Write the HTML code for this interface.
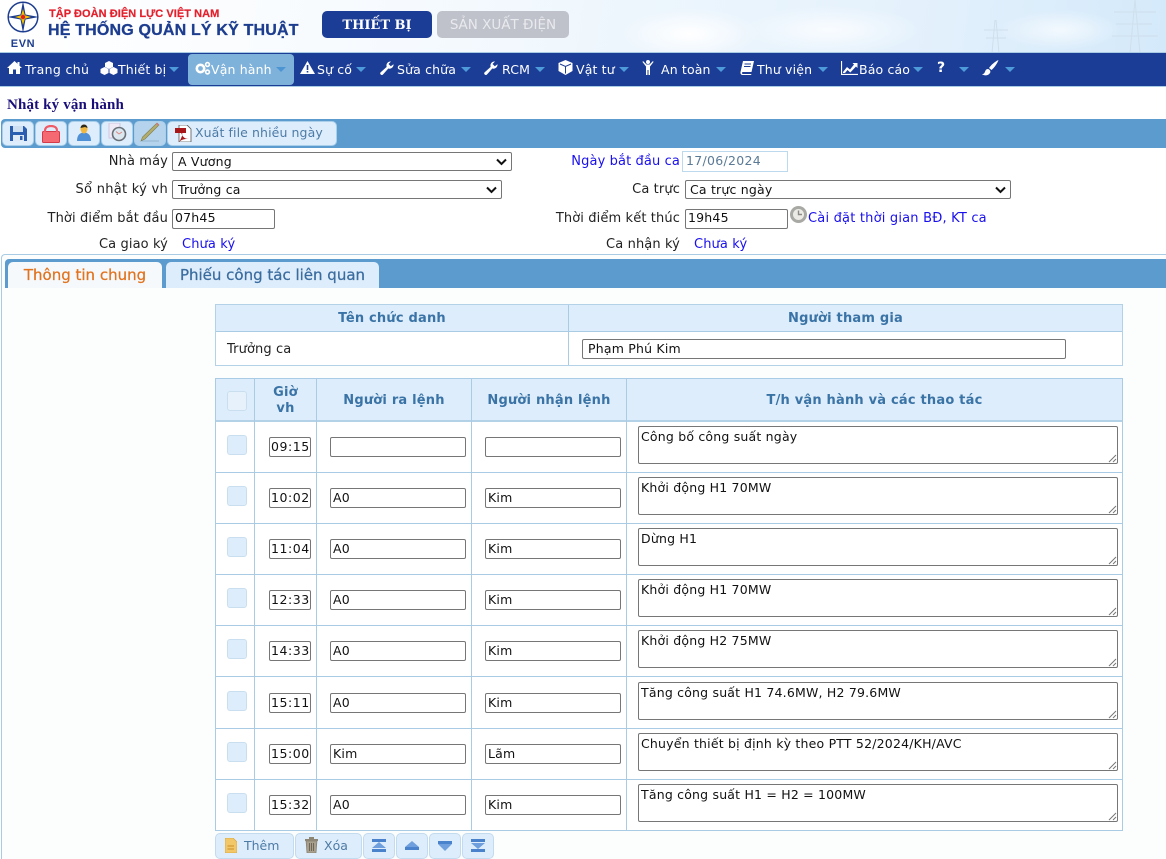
<!DOCTYPE html>
<html><head><meta charset="utf-8">
<style>
*{box-sizing:border-box}
html,body{margin:0;padding:0;width:1166px;height:859px;overflow:hidden;background:#fff}
body{font-family:"DejaVu Sans","Liberation Sans",sans-serif;font-size:12.5px;color:#222;position:relative}
.a{position:absolute;white-space:nowrap}
.r{position:absolute;white-space:nowrap;text-align:right}
.l{line-height:16px;font-size:13px;letter-spacing:.12px}
.box{position:absolute;background:#fff;border:1px solid #767676;border-radius:2px;color:#111;white-space:nowrap;padding-left:2px;font-size:12.5px;line-height:18px;letter-spacing:.2px}
.t{padding-left:1px;letter-spacing:.55px}
.ta{line-height:19px}
.sel{padding-left:4px}
.sel svg{position:absolute;right:4px;top:5px}
.b{color:#1a10ee}
.line{position:absolute;background:#a9cbe4}
.cb{position:absolute;width:20px;height:20px;background:#deedfb;border:1px solid #c9dfef;border-radius:3px}
.th{position:absolute;text-align:center;font-weight:bold;color:#3a73a6;font-size:13px;letter-spacing:.2px}
.nav{position:absolute;top:62px;color:#fff;font-size:12.5px;white-space:nowrap;line-height:16px;letter-spacing:.15px}
.car{position:absolute;top:67px;width:0;height:0;border-left:5px solid transparent;border-right:5px solid transparent;border-top:5px solid #4d9bd8}
.tb{position:absolute;top:121px;height:25px;background:#deedfb;border:1px solid #a9cfea;border-radius:5px}
.bb{position:absolute;top:833px;height:26px;background:#deedfb;border:1px solid #c3dbee;border-radius:5px;color:#4d7ba6;font-size:12.5px;line-height:24px}
svg{position:absolute;display:block}
</style></head><body>

<!-- header bg -->
<div class="a" style="left:0;top:0;width:1166px;height:53px;background:radial-gradient(ellipse 70px 26px at 690px 34px,#ffffff 0%,rgba(255,255,255,0) 100%),radial-gradient(ellipse 90px 24px at 830px 30px,#f9fcff 0%,rgba(255,255,255,0) 100%),radial-gradient(ellipse 60px 20px at 1060px 30px,#f3f9fe 0%,rgba(255,255,255,0) 100%),linear-gradient(100deg,#ffffff 0%,#f6fafe 35%,#edf6fd 55%,#e4f1fc 78%,#d4e9fa 100%)"></div>
<svg style="left:980px;top:0" width="186" height="53"><g stroke="#cfdfeb" stroke-width="1" fill="none"><path d="M150 53L155 0M160 53L155 0M134 12H176M136 24H172M132 36H178"/><path d="M12 53L15 20M19 53L16 20M4 30H28M6 38H26"/></g></svg>
<svg style="left:5px;top:1px" width="36" height="48" viewBox="0 0 36 48">
<circle cx="18" cy="16" r="14.800" fill="none" stroke="#1d3d8f" stroke-width="1.500"/>
<path d="M18 0L20.500 13.500L34 16L20.500 18.500L18 32L15.500 18.500L2 16L15.500 13.500Z" fill="#1d3d8f"/>
<path d="M18 8L19.800 14.200L26 16L19.800 17.800L18 24L16.200 17.800L10 16L16.200 14.200Z" fill="#f2c200"/>
<circle cx="18" cy="16" r="2.200" fill="#e02020"/>
<text x="18" y="46" text-anchor="middle" font-family="Liberation Sans" font-weight="bold" font-size="11" fill="#1d3d8f" letter-spacing=".6">EVN</text>
</svg>
<div class="a" style="left:49px;top:7px;font:bold 11px/15px 'Liberation Sans',sans-serif;color:#e3202c;letter-spacing:.05px;-webkit-text-stroke:.2px #e3202c">TẬP ĐOÀN ĐIỆN LỰC VIỆT NAM</div>
<div class="a" style="left:48px;top:21px;font:bold 16px/20px 'Liberation Sans',sans-serif;color:#1d3d8f;letter-spacing:.18px;-webkit-text-stroke:.3px #1d3d8f">HỆ THỐNG QUẢN LÝ KỸ THUẬT</div>
<div class="a" style="left:322px;top:11px;width:110px;height:27px;border-radius:5px;background:#1c3d96;color:#fff;text-align:center;font:bold 13px/29px 'DejaVu Serif','Liberation Serif',serif">THIẾT BỊ</div>
<div class="a" style="left:437px;top:11px;width:132px;height:27px;border-radius:5px;background:#bfc1cb;color:#e9eaee;text-align:center;font:13.500px/29px 'DejaVu Sans',sans-serif">SẢN XUẤT ĐIỆN</div>

<!-- nav -->
<div class="a" style="left:0;top:52px;width:1166px;height:35px;background:#1c3d96;border-top:1px solid #a9cbe4;border-bottom:1px solid #a9cbe4"></div>
<div class="a" style="left:188px;top:54px;width:106px;height:31px;background:#7fb2da;border-radius:4px"></div>

<svg style="left:7px;top:61px" width="15" height="13" viewBox="0 0 15 13"><path d="M7.500 0L10.500 2.800V1H12.500V4.700L15 7H13V13H9V8.500H6V13H2V7H0Z" fill="#fff"/></svg>
<div class="nav" style="left:25px;letter-spacing:.35px">Trang chủ</div>
<svg style="left:100px;top:61px" width="18" height="14" viewBox="0 0 18 14"><g fill="#fff"><path d="M9 0l4 2v4l-4 2-4-2V2z"/><path d="M4.500 6l4 2v4l-4 2-4-2V8z"/><path d="M13.500 6l4 2v4l-4 2-4-2V8z"/></g></svg>
<div class="nav" style="left:118px">Thiết bị</div><div class="car" style="left:169px"></div>
<svg style="left:195px;top:61px" width="16" height="14" viewBox="0 0 16 14"><circle cx="5.500" cy="7.500" r="3.700" fill="none" stroke="#fff" stroke-width="2.600"/><circle cx="12.500" cy="3.500" r="1.900" fill="none" stroke="#fff" stroke-width="1.600"/><circle cx="12.500" cy="11" r="1.900" fill="none" stroke="#fff" stroke-width="1.600"/></svg>
<div class="nav" style="left:211px">Vận hành</div><div class="car" style="left:276px;border-top-color:#4d94d2"></div>
<svg style="left:300px;top:61px" width="15" height="13" viewBox="0 0 15 13"><path d="M7.500 0L15 13H0Z" fill="#fff"/><path d="M6.700 4h1.600v5H6.700zM6.700 10h1.600v1.500H6.700z" fill="#1c3d96"/></svg>
<div class="nav" style="left:317px">Sự cố</div><div class="car" style="left:356px"></div>
<svg style="left:380px;top:61px" width="14" height="14" viewBox="0 0 14 14"><path d="M13.500 3.200a4 4 0 0 1-5.200 4.300L3 13.500a1.500 1.500 0 0 1-2.300-2.200l6-5.400A4 4 0 0 1 11 .5L8.500 3l2.300 2.300z" fill="#fff"/></svg>
<div class="nav" style="left:397px">Sửa chữa</div><div class="car" style="left:461px"></div>
<svg style="left:484px;top:61px" width="14" height="14" viewBox="0 0 14 14"><path d="M13.500 3.200a4 4 0 0 1-5.200 4.300L3 13.500a1.500 1.500 0 0 1-2.300-2.200l6-5.400A4 4 0 0 1 11 .5L8.500 3l2.300 2.300z" fill="#fff"/></svg>
<div class="nav" style="left:502px">RCM</div><div class="car" style="left:535px"></div>
<svg style="left:558px;top:60px" width="15" height="15" viewBox="0 0 15 15"><path d="M7.500 0L14.500 3V11L7.500 15L.5 11V3Z" fill="#fff"/><path d="M2 4L7.500 6.500L13 4M7.500 6.500V13.500" stroke="#1c3d96" stroke-width="1" fill="none"/></svg>
<div class="nav" style="left:576px">Vật tư</div><div class="car" style="left:619px"></div>
<svg style="left:642px;top:60px" width="12" height="15" viewBox="0 0 12 15"><circle cx="6" cy="2" r="2" fill="#fff"/><path d="M1 1L4.500 4.500H7.500L11 1L11.500 2L8 6.500V15H6.500V10H5.500V15H4V6.500L.5 2Z" fill="#fff"/></svg>
<div class="nav" style="left:661px">An toàn</div><div class="car" style="left:716px"></div>
<svg style="left:740px;top:61px" width="14" height="14" viewBox="0 0 14 14"><path d="M3 0H14L11.500 11H2.500Q1.500 12 2.500 13H11.500L11 14H2Q0 13 .5 11Z" fill="#fff"/><path d="M4.500 3H11M4 5.500H10.500" stroke="#1c3d96" stroke-width=".9"/></svg>
<div class="nav" style="left:757px">Thư viện</div><div class="car" style="left:818px"></div>
<svg style="left:841px;top:61px" width="17" height="14" viewBox="0 0 17 14"><path d="M.5 0V13.500H17" stroke="#fff" stroke-width="1.200" fill="none"/><path d="M2 11L6 6L9 8.500L13 3.500L11.500 2H16.500V7L15 5.500L9.300 11.500L6.500 9L4 12H2Z" fill="#fff"/></svg>
<div class="nav" style="left:859px">Báo cáo</div><div class="car" style="left:913px"></div>
<div class="nav" style="left:937px;top:60px;font-weight:bold;font-size:14px">?</div><div class="car" style="left:959px"></div>
<svg style="left:981px;top:60px" width="18" height="16" viewBox="0 0 18 16"><path d="M17.500 0C14 1.500 10 5 8 8L10.500 10C13 8 16 4 17.500 0Z" fill="#fff"/><path d="M7 9C4 9 4.500 12 3 13.500C2.500 14 1.500 14 1 14C3 16 7 16 9 13C10 11.500 9 9.500 7 9Z" fill="#fff"/></svg>
<div class="car" style="left:1005px"></div>

<!-- title -->
<div class="a" style="left:7px;top:97px;font:bold 15px/17px 'Liberation Serif','DejaVu Serif',serif;color:#1a0f7a;letter-spacing:.15px">Nhật ký vận hành</div>

<!-- toolbar -->
<div class="a" style="left:1px;top:119px;width:1165px;height:29px;background:#5b9bce;border-radius:4px 0 0 4px"></div>
<div class="tb" style="left:2px;width:32px"></div>
<div class="tb" style="left:35px;width:32px"></div>
<div class="tb" style="left:68px;width:32px"></div>
<div class="tb" style="left:101px;width:32px"></div>
<div class="tb" style="left:134px;width:32px;background:#b5d3ec"></div>
<div class="tb" style="left:167px;width:170px"></div>
<svg style="left:10px;top:125px" width="17" height="17" viewBox="0 0 17 17"><path d="M0 1H14L17 4V16H0Z" fill="#2a5db0"/><rect x="3" y="1" width="10" height="6" fill="#cfdff2"/><rect x="3" y="10" width="11" height="6" fill="#dfe9f5"/><rect x="10" y="11" width="2.500" height="4" fill="#2a5db0"/></svg>
<svg style="left:42px;top:125px" width="18" height="18" viewBox="0 0 18 18"><rect x=".5" y="6.500" width="17" height="11" rx="1" fill="#f56a72" stroke="#d43a48"/><path d="M3 7V5.500C3 2.500 5.500 1 9 1S15 2.500 15 5.500V7" fill="none" stroke="#ef5a66" stroke-width="2.200"/></svg>
<svg style="left:77px;top:124px" width="14" height="17" viewBox="0 0 14 17"><path d="M0 17C0 11 3 8.500 7 8.500S14 11 14 17Z" fill="#4f8fd6"/><ellipse cx="7" cy="5" rx="3.500" ry="4.500" fill="#f1b840"/><path d="M3.500 4a3.500 3.500 0 0 1 7 0L8 3Z" fill="#2e2a18"/></svg>
<svg style="left:108px;top:123px" width="19" height="19" viewBox="0 0 19 19"><rect x="1" y="0" width="11" height="15" fill="#efeaf6" stroke="#cfc7e0"/><circle cx="11" cy="11" r="6.500" fill="#dbe8ef" stroke="#6a7078" stroke-width="1.600"/><path d="M11 11L8 8.500M11 11L14 9" stroke="#d88" stroke-width="1"/></svg>
<svg style="left:140px;top:122px" width="20" height="20" viewBox="0 0 20 20"><path d="M17 1L19 3L5 17L1 19L2.500 15Z" fill="#b3ad6a" stroke="#7e7a55" stroke-width=".6"/><path d="M16 2L18 4L19 3L17 1Z" fill="#d9787c"/><path d="M2 19L19 19" stroke="#8aa9c4" stroke-width=".8"/></svg>
<svg style="left:175px;top:125px" width="17" height="17" viewBox="0 0 17 17"><path d="M4 0H12L16 4V17H4Z" fill="#fff" stroke="#555" stroke-width=".8"/><path d="M0 3H11V8H0Z" fill="#a81818"/><path d="M6 7C7 11 9 14 14 14C10 14 7 14 4 17C6 14 8 10 7 7Z" fill="#a81818"/></svg>
<div class="a" style="left:195px;top:125px;font-size:12.5px;line-height:16px;color:#4d7ba6;letter-spacing:.1px">Xuất file nhiều ngày</div>

<!-- form -->
<div class="r l" style="right:998px;top:154px">Nhà máy</div>
<div class="box sel" style="left:172px;top:152px;width:340px;height:19px;line-height:17px;padding-left:5px">A Vương<svg width="11" height="8" viewBox="0 0 11 8" style="right:4px;top:5px"><path d="M1 1.500L5.500 6L10 1.500" fill="none" stroke="#111" stroke-width="2"/></svg></div>
<div class="r l" style="right:998px;top:182px;letter-spacing:.28px">Sổ nhật ký vh</div>
<div class="box sel" style="left:172px;top:180px;width:330px;height:19px;line-height:17px;padding-left:5px">Trưởng ca<svg width="11" height="8" viewBox="0 0 11 8" style="right:4px;top:5px"><path d="M1 1.500L5.500 6L10 1.500" fill="none" stroke="#111" stroke-width="2"/></svg></div>
<div class="r l" style="right:998px;top:211px">Thời điểm bắt đầu</div>
<div class="box" style="left:172px;top:209px;width:103px;height:20px;line-height:16px">07h45</div>
<div class="r l" style="right:998px;top:237px">Ca giao ký</div>
<div class="a b l" style="left:182px;top:237px">Chưa ký</div>

<div class="r b l" style="right:486px;top:154px">Ngày bắt đầu ca</div>
<div class="a" style="left:682px;top:151px;width:106px;height:21px;border:1px solid #bcd9ee;color:#5b7a96;padding-left:3px;line-height:18px;font-size:12.500px;letter-spacing:.3px">17/06/2024</div>
<div class="r l" style="right:486px;top:182px">Ca trực</div>
<div class="box sel" style="left:685px;top:180px;width:326px;height:19px;line-height:17px">Ca trực ngày<svg width="11" height="8" viewBox="0 0 11 8" style="right:4px;top:5px"><path d="M1 1.500L5.500 6L10 1.500" fill="none" stroke="#111" stroke-width="2"/></svg></div>
<div class="r l" style="right:486px;top:211px">Thời điểm kết thúc</div>
<div class="box" style="left:685px;top:209px;width:103px;height:20px;line-height:16px">19h45</div>
<svg style="left:790px;top:206px" width="17" height="17" viewBox="0 0 17 17"><circle cx="8.500" cy="8.500" r="8.500" fill="#a8a8a4"/><circle cx="8.500" cy="8.500" r="5.500" fill="#eceae4"/><path d="M8.500 4.500V8.500H12" stroke="#8a8a86" stroke-width="1.400" fill="none"/></svg>
<div class="a b l" style="left:808px;top:211px;letter-spacing:.2px">Cài đặt thời gian BĐ, KT ca</div>
<div class="r l" style="right:486px;top:237px">Ca nhận ký</div>
<div class="a b l" style="left:694px;top:237px">Chưa ký</div>

<!-- tab panel -->
<div class="a" style="left:1px;top:254px;width:1165px;height:605px;border-top:1px solid #a9cbe4;border-left:1px solid #a9cbe4;border-radius:4px 0 0 0;background:#fcfefe"></div>
<div class="a" style="left:5px;top:259px;width:1161px;height:29px;background:#5b9bce;border-radius:4px 0 0 0"></div>
<div class="a" style="left:8px;top:262px;width:154px;height:26px;background:#f6f9fb;border-radius:5px 5px 0 0;color:#e1731f;font-size:15px;line-height:27px;text-align:center;-webkit-text-stroke:.25px #e1731f">Thông tin chung</div>
<div class="a" style="left:166px;top:262px;width:213px;height:26px;background:#deedfb;border-radius:5px 5px 0 0;color:#3a6c9f;font-size:15px;line-height:27px;text-align:center;-webkit-text-stroke:.25px #3a6c9f">Phiếu công tác liên quan</div>

<!-- table 1 -->
<div class="a" style="left:215px;top:304px;width:908px;height:62px;background:#fff;border:1px solid #b3d2e8"></div>
<div class="a" style="left:216px;top:305px;width:906px;height:27px;background:#deedfb;border-bottom:1px solid #a9cbe4"></div>
<div class="line" style="left:568px;top:305px;width:1px;height:60px"></div>
<div class="th" style="left:216px;width:352px;top:310px;line-height:18px">Tên chức danh</div>
<div class="th" style="left:569px;width:553px;top:310px;line-height:18px">Người tham gia</div>
<div class="a l" style="left:227px;top:341px;line-height:18px">Trưởng ca</div>
<div class="box" style="left:582px;top:339px;width:484px;height:20px;line-height:17px;padding-left:5px">Phạm Phú Kim</div>

<!-- table 2 -->
<div class="a" style="left:215px;top:378px;width:908px;height:453px;background:#fff;border:1px solid #a9cbe4"></div>
<div class="a" style="left:216px;top:379px;width:906px;height:43px;background:#deedfb;border-bottom:2px solid #b3d2e8"></div>
<div class="line" style="left:254px;top:379px;width:1px;height:452px"></div>
<div class="line" style="left:316px;top:379px;width:1px;height:452px"></div>
<div class="line" style="left:471px;top:379px;width:1px;height:452px"></div>
<div class="line" style="left:626px;top:379px;width:1px;height:452px"></div>
<div class="line" style="left:216px;top:472px;width:906px;height:1px"></div>
<div class="line" style="left:216px;top:523px;width:906px;height:1px"></div>
<div class="line" style="left:216px;top:574px;width:906px;height:1px"></div>
<div class="line" style="left:216px;top:625px;width:906px;height:1px"></div>
<div class="line" style="left:216px;top:676px;width:906px;height:1px"></div>
<div class="line" style="left:216px;top:728px;width:906px;height:1px"></div>
<div class="line" style="left:216px;top:779px;width:906px;height:1px"></div>
<div class="cb" style="left:227px;top:391px;background:#e6f1fb"></div>
<div class="th" style="left:255px;width:61px;top:385px;line-height:16px">Giờ<br>vh</div>
<div class="th" style="left:317px;width:154px;top:393px;line-height:16px">Người ra lệnh</div>
<div class="th" style="left:472px;width:154px;top:393px;line-height:16px">Người nhận lệnh</div>
<div class="th" style="left:627px;width:495px;top:393px;line-height:16px">T/h vận hành và các thao tác</div>

<div class="cb" style="left:227px;top:435px"></div>
<div class="box t" style="left:269px;top:437px;width:42px;height:20px;line-height:17px">09:15</div>
<div class="box" style="left:330px;top:437px;width:136px;height:20px;line-height:17px"></div>
<div class="box" style="left:485px;top:437px;width:136px;height:20px;line-height:17px"></div>
<div class="box ta" style="left:638px;top:426px;width:480px;height:38px">Công bố công suất ngày<svg width="9" height="9" viewBox="0 0 9 9" style="right:0;bottom:0"><path d="M1 8L8 1M5 8L8 5" stroke="#777" stroke-width="1"/></svg></div>

<div class="cb" style="left:227px;top:486px"></div>
<div class="box t" style="left:269px;top:488px;width:42px;height:20px;line-height:17px">10:02</div>
<div class="box" style="left:330px;top:488px;width:136px;height:20px;line-height:17px">A0</div>
<div class="box" style="left:485px;top:488px;width:136px;height:20px;line-height:17px">Kim</div>
<div class="box ta" style="left:638px;top:477px;width:480px;height:38px">Khởi động H1 70MW<svg width="9" height="9" viewBox="0 0 9 9" style="right:0;bottom:0"><path d="M1 8L8 1M5 8L8 5" stroke="#777" stroke-width="1"/></svg></div>

<div class="cb" style="left:227px;top:537px"></div>
<div class="box t" style="left:269px;top:539px;width:42px;height:20px;line-height:17px">11:04</div>
<div class="box" style="left:330px;top:539px;width:136px;height:20px;line-height:17px">A0</div>
<div class="box" style="left:485px;top:539px;width:136px;height:20px;line-height:17px">Kim</div>
<div class="box ta" style="left:638px;top:528px;width:480px;height:38px">Dừng H1<svg width="9" height="9" viewBox="0 0 9 9" style="right:0;bottom:0"><path d="M1 8L8 1M5 8L8 5" stroke="#777" stroke-width="1"/></svg></div>

<div class="cb" style="left:227px;top:588px"></div>
<div class="box t" style="left:269px;top:590px;width:42px;height:20px;line-height:17px">12:33</div>
<div class="box" style="left:330px;top:590px;width:136px;height:20px;line-height:17px">A0</div>
<div class="box" style="left:485px;top:590px;width:136px;height:20px;line-height:17px">Kim</div>
<div class="box ta" style="left:638px;top:579px;width:480px;height:38px">Khởi động H1 70MW<svg width="9" height="9" viewBox="0 0 9 9" style="right:0;bottom:0"><path d="M1 8L8 1M5 8L8 5" stroke="#777" stroke-width="1"/></svg></div>

<div class="cb" style="left:227px;top:639px"></div>
<div class="box t" style="left:269px;top:641px;width:42px;height:20px;line-height:17px">14:33</div>
<div class="box" style="left:330px;top:641px;width:136px;height:20px;line-height:17px">A0</div>
<div class="box" style="left:485px;top:641px;width:136px;height:20px;line-height:17px">Kim</div>
<div class="box ta" style="left:638px;top:630px;width:480px;height:38px">Khởi động H2 75MW<svg width="9" height="9" viewBox="0 0 9 9" style="right:0;bottom:0"><path d="M1 8L8 1M5 8L8 5" stroke="#777" stroke-width="1"/></svg></div>

<div class="cb" style="left:227px;top:691px"></div>
<div class="box t" style="left:269px;top:693px;width:42px;height:20px;line-height:17px">15:11</div>
<div class="box" style="left:330px;top:693px;width:136px;height:20px;line-height:17px">A0</div>
<div class="box" style="left:485px;top:693px;width:136px;height:20px;line-height:17px">Kim</div>
<div class="box ta" style="left:638px;top:682px;width:480px;height:38px">Tăng công suất H1 74.6MW, H2 79.6MW<svg width="9" height="9" viewBox="0 0 9 9" style="right:0;bottom:0"><path d="M1 8L8 1M5 8L8 5" stroke="#777" stroke-width="1"/></svg></div>

<div class="cb" style="left:227px;top:742px"></div>
<div class="box t" style="left:269px;top:744px;width:42px;height:20px;line-height:17px">15:00</div>
<div class="box" style="left:330px;top:744px;width:136px;height:20px;line-height:17px">Kim</div>
<div class="box" style="left:485px;top:744px;width:136px;height:20px;line-height:17px">Lãm</div>
<div class="box ta" style="left:638px;top:733px;width:480px;height:38px">Chuyển thiết bị định kỳ theo PTT 52/2024/KH/AVC<svg width="9" height="9" viewBox="0 0 9 9" style="right:0;bottom:0"><path d="M1 8L8 1M5 8L8 5" stroke="#777" stroke-width="1"/></svg></div>

<div class="cb" style="left:227px;top:793px"></div>
<div class="box t" style="left:269px;top:795px;width:42px;height:20px;line-height:17px">15:32</div>
<div class="box" style="left:330px;top:795px;width:136px;height:20px;line-height:17px">A0</div>
<div class="box" style="left:485px;top:795px;width:136px;height:20px;line-height:17px">Kim</div>
<div class="box ta" style="left:638px;top:784px;width:480px;height:38px">Tăng công suất H1 = H2 = 100MW<svg width="9" height="9" viewBox="0 0 9 9" style="right:0;bottom:0"><path d="M1 8L8 1M5 8L8 5" stroke="#777" stroke-width="1"/></svg></div>

<!-- bottom buttons -->
<div class="bb" style="left:215px;width:79px;padding-left:28px">Thêm</div>
<div class="bb" style="left:295px;width:67px;padding-left:28px">Xóa</div>
<div class="bb" style="left:363px;width:32px"></div>
<div class="bb" style="left:396px;width:32px"></div>
<div class="bb" style="left:429px;width:32px"></div>
<div class="bb" style="left:462px;width:32px"></div>
<svg style="left:225px;top:838px" width="12" height="15" viewBox="0 0 12 15"><path d="M0 0H8L12 4V15H0Z" fill="#f2c767" stroke="#d9a441" stroke-width=".7"/><path d="M2.500 8H9M2.500 11H9" stroke="#c98f2a"/></svg>
<svg style="left:305px;top:837px" width="13" height="16" viewBox="0 0 13 16"><path d="M1 4H12L11 16H2Z" fill="#a89f8c" stroke="#7b7364" stroke-width=".6"/><rect x="0" y="2" width="13" height="2" fill="#8e8674"/><rect x="4" y="0" width="5" height="2" fill="#8e8674"/><path d="M4.500 6V14M6.500 6V14M8.500 6V14" stroke="#6e6758"/></svg>
<svg style="left:371px;top:839px" width="16" height="14" viewBox="0 0 16 14"><rect x="1" y="0" width="14" height="3" fill="#4a83cb"/><path d="M8 3L15 9H1Z" fill="#6f9fdc"/><rect x="1" y="10" width="14" height="3" fill="#4a83cb"/></svg>
<svg style="left:404px;top:840px" width="16" height="11" viewBox="0 0 16 11"><path d="M8 1L15 7H1Z" fill="#6f9fdc"/><rect x="1" y="7" width="14" height="3" fill="#4a83cb"/></svg>
<svg style="left:437px;top:841px" width="16" height="11" viewBox="0 0 16 11"><rect x="1" y="0" width="14" height="3" fill="#4a83cb"/><path d="M8 10L15 3H1Z" fill="#6f9fdc"/></svg>
<svg style="left:470px;top:839px" width="16" height="14" viewBox="0 0 16 14"><rect x="1" y="0" width="14" height="3" fill="#4a83cb"/><path d="M8 10L15 4H1Z" fill="#6f9fdc"/><rect x="1" y="10" width="14" height="3" fill="#4a83cb"/></svg>
</body></html>
